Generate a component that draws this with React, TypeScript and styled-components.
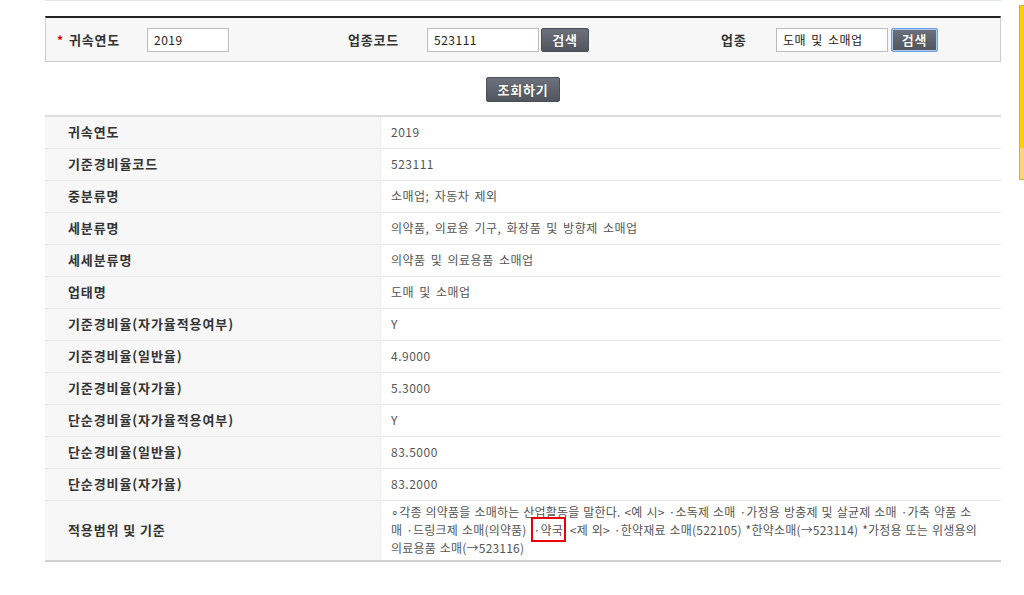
import React from 'react'
import styled, { createGlobalStyle } from 'styled-components'

const GlobalStyle = createGlobalStyle`
    html, body {
        margin: 0;
        padding: 0;
        background: #fff;
    }
    body {
        font-family: "Noto Sans CJK KR", "Noto Sans", sans-serif;
        font-size: 12px;
        color: #333;
    }
`

const Page = styled.div`
    width: 956px;
    padding-left: 45px;
`

const TopLine = styled.div`
    height: 1px;
    background: #dfe6ee;
`

const SearchBox = styled.div`
    margin-top: 15px;
    height: 43px;
    display: flex;
    align-items: center;
    background: #f7f7f7;
    border: 1px solid #cccccc;
    border-top: 2px solid #222;
    padding-left: 11px;
`

const Field = styled.div<{ $offset: number }>`
    display: flex;
    align-items: center;
    margin-left: ${(p) => p.$offset}px;
`

const Label = styled.label<{ $width: number }>`
    width: ${(p) => p.$width}px;
    font-size: 13px;
    font-weight: bold;
    letter-spacing: 0.8px;
    color: #333;
    display: flex;
    align-items: center;
`

const Star = styled.span`
    color: #cc0000;
    margin-right: 5px;
    font-size: 12px;
`

const Input = styled.input<{ $width: number }>`
    width: ${(p) => p.$width}px;
    height: 24px;
    box-sizing: border-box;
    border: 1px solid #bbbbbb;
    background: #fff;
    padding: 0 6px;
    font-family: "Noto Sans CJK KR", "Noto Sans", sans-serif;
    font-size: 12px;
    letter-spacing: 0.5px;
    word-spacing: 2px;
    color: #222;
    outline: none;
`

const DarkButton = styled.button<{ $focus?: boolean; $width: number; $height?: number }>`
    width: ${(p) => p.$width}px;
    height: ${(p) => p.$height ?? 24}px;
    margin-left: ${(p) => (p.$focus ? 3 : 2)}px;
    padding: 0;
    border: 1px solid ${(p) => (p.$focus ? '#6f9fe0' : '#4a4f58')};
    border-radius: 2px;
    background: linear-gradient(#6c717b, #50555e);
    color: #fff;
    font-family: "Noto Sans CJK KR", "Noto Sans", sans-serif;
    font-size: 13px;
    font-weight: bold;
    letter-spacing: 0.8px;
    text-shadow: 0 0 1px #20242a;
    cursor: pointer;
    box-shadow: ${(p) => (p.$focus ? '0 0 0 1px #a9c8f0 inset' : 'none')};
`

const CenterBar = styled.div`
    display: flex;
    justify-content: center;
    padding: 15px 0 13px;

    & > button {
        margin-left: 0;
    }
`

const Table = styled.table`
    width: 100%;
    table-layout: fixed;
    border-collapse: collapse;
    border-top: 2px solid #dddddd;
    border-bottom: 2px solid #d0d0d0;
`

const Row = styled.tr`
    border-bottom: 1px solid #e6e6e6;
    &:last-child {
        border-bottom: none;
    }
`

const Head = styled.th`
    width: 312px;
    height: 29px;
    padding: 0 0 2px 23px;
    background: #f7f7f7;
    text-align: left;
    font-size: 13px;
    font-weight: bold;
    letter-spacing: 0.9px;
    color: #333;
`

const Cell = styled.td`
    padding: 0 10px 2px;
    border-left: 1px solid #eeeeee;
    font-size: 12px;
    letter-spacing: 0.5px;
    word-spacing: 2px;
    color: #555;
`

const LongCell = styled(Cell)`
    padding: 2px 8px 3px 10px;
    line-height: 18px;
    letter-spacing: 0.2px;
    word-spacing: 1px;
`

const Line = styled.span`
    display: block;
    white-space: nowrap;
`

const Marked = styled.span`
    border: 2px solid #e8000b;
    padding: 2px 1px;
`

const SideTab = styled.div`
    position: fixed;
    right: 0;
    top: 5px;
    width: 4px;
    height: 173px;
    border: 1px solid #c9b23c;
    border-right: none;
    background: linear-gradient(#ffcc00 0, #ffcc00 82%, #ffd47a 82%);
`

const rows: [string, string][] = [
    ['귀속연도', '2019'],
    ['기준경비율코드', '523111'],
    ['중분류명', '소매업; 자동차 제외'],
    ['세분류명', '의약품, 의료용 기구, 화장품 및 방향제 소매업'],
    ['세세분류명', '의약품 및 의료용품 소매업'],
    ['업태명', '도매 및 소매업'],
    ['기준경비율(자가율적용여부)', 'Y'],
    ['기준경비율(일반율)', '4.9000'],
    ['기준경비율(자가율)', '5.3000'],
    ['단순경비율(자가율적용여부)', 'Y'],
    ['단순경비율(일반율)', '83.5000'],
    ['단순경비율(자가율)', '83.2000'],
]

export default function App() {
    return (
        <>
            <GlobalStyle />
            <Page>
                <TopLine />
                <SearchBox>
                    <Field $offset={0}>
                        <Label $width={90}>
                            <Star>*</Star>귀속연도
                        </Label>
                        <Input $width={82} defaultValue="2019" />
                    </Field>
                    <Field $offset={119}>
                        <Label $width={79}>업종코드</Label>
                        <Input $width={112} defaultValue="523111" />
                        <DarkButton $width={48}>검색</DarkButton>
                    </Field>
                    <Field $offset={132}>
                        <Label $width={55}>업종</Label>
                        <Input $width={112} defaultValue="도매 및 소매업" />
                        <DarkButton $width={47} $focus>검색</DarkButton>
                    </Field>
                </SearchBox>
                <CenterBar>
                    <DarkButton $width={74} $height={25}>조회하기</DarkButton>
                </CenterBar>
                <Table>
                    <tbody>
                        {rows.map(([k, v]) => (
                            <Row key={k}>
                                <Head>{k}</Head>
                                <Cell>{v}</Cell>
                            </Row>
                        ))}
                        <Row>
                            <Head>적용범위 및 기준</Head>
                            <LongCell>
                                <Line>∘각종 의약품을 소매하는 산업활동을 말한다. &lt;예 시&gt; ·소독제 소매 ·가정용 방충제 및 살균제 소매 ·가축 약품 소</Line>
                                <Line>매 ·드링크제 소매(의약품) <Marked>·약국</Marked> &lt;제 외&gt; ·한약재료 소매(522105) *한약소매(→523114) *가정용 또는 위생용의</Line>
                                <Line>의료용품 소매(→523116)</Line>
                            </LongCell>
                        </Row>
                    </tbody>
                </Table>
            </Page>
            <SideTab />
        </>
    )
}
